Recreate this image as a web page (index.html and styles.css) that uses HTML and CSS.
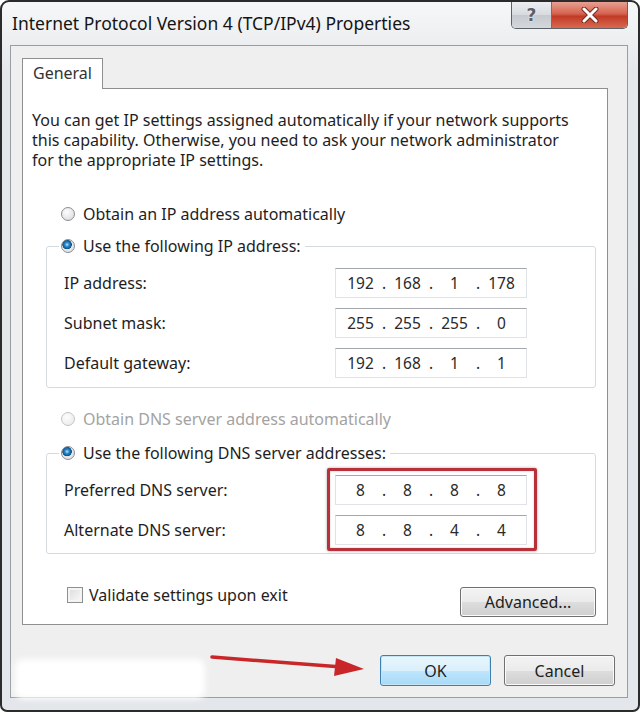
FILE: index.html
```html
<!DOCTYPE html>
<html>
<head>
  <meta charset="utf-8">
  <title>Internet Protocol Version 4 (TCP/IPv4) Properties</title>
  <link rel="stylesheet" href="styles.css">
</head>
<body>
<div class="Window">

  <div class="TitleBar">
    <span class="Title">Internet Protocol Version 4 (TCP/IPv4) Properties</span>
    <div class="Caption">
      <span class="HelpBtn">?</span>
      <span class="CloseBtn">
        <svg width="20" height="16" viewBox="0 0 20 16">
          <path d="M4 2 L16 14 M16 2 L4 14" stroke="#7a2a20" stroke-width="5" stroke-linecap="round"/>
          <path d="M4 2 L16 14 M16 2 L4 14" stroke="#fff" stroke-width="3" stroke-linecap="round"/>
        </svg>
      </span>
    </div>
  </div>

  <div class="Client">
    <div class="Tab">General</div>

    <div class="Panel">
      <p class="Intro">You can get IP settings assigned automatically if your network supports this capability. Otherwise, you need to ask your network administrator for the appropriate IP settings.</p>

      <div class="Option"><span class="Radio"></span>Obtain an IP address automatically</div>

      <fieldset class="Group">
        <legend class="Option"><span class="Radio is-checked"></span>Use the following IP address:</legend>
        <div class="Fields">
          <span>IP address:</span>
          <div class="IpBox"><span>192</span><i>.</i><span>168</span><i>.</i><span>1</span><i>.</i><span>178</span></div>
          <span>Subnet mask:</span>
          <div class="IpBox"><span>255</span><i>.</i><span>255</span><i>.</i><span>255</span><i>.</i><span>0</span></div>
          <span>Default gateway:</span>
          <div class="IpBox"><span>192</span><i>.</i><span>168</span><i>.</i><span>1</span><i>.</i><span>1</span></div>
        </div>
      </fieldset>

      <div class="Option Option--dns is-disabled"><span class="Radio"></span>Obtain DNS server address automatically</div>

      <fieldset class="Group Group--dns">
        <legend class="Option"><span class="Radio is-checked"></span>Use the following DNS server addresses:</legend>
        <div class="Fields Fields--dns">
          <span>Preferred DNS server:</span>
          <div class="IpBox"><span>8</span><i>.</i><span>8</span><i>.</i><span>8</span><i>.</i><span>8</span></div>
          <span>Alternate DNS server:</span>
          <div class="IpBox"><span>8</span><i>.</i><span>8</span><i>.</i><span>4</span><i>.</i><span>4</span></div>
          <div class="Highlight"></div>
        </div>
      </fieldset>

      <div class="Footer">
        <div class="Check"><span class="CheckBox"></span>Validate settings upon exit</div>
        <span class="Btn Btn--advanced">Advanced...</span>
      </div>
    </div>

    <div class="ButtonBar">
      <span class="Smudge"></span>
      <svg class="Arrow" width="160" height="32" viewBox="0 0 160 32">
        <path d="M2 8 L132 18" stroke="#c9262a" stroke-width="3.5" stroke-linecap="round"/>
        <polygon points="126,9 154,20 124,27" fill="#c9262a"/>
      </svg>
      <span class="Btn Btn--default">OK</span>
      <span class="Btn">Cancel</span>
    </div>
  </div>

</div>
</body>
</html>
```
FILE: styles.css
```css
* {
  box-sizing: border-box;
}
body {
  margin: 0;
  font-family: "Noto Sans", "Open Sans", sans-serif;
  font-size: 16px;
  color: #1e1e1e;
}
.Window {
  display: flex;
  flex-direction: column;
  width: 640px;
  height: 712px;
  padding: 0 10px 12px 8px;
  border: 2px solid #2b2b2b;
  border-radius: 9px 9px 7px 7px;
  background: linear-gradient(#f6f7f8, #e5e8eb 70px, #e3e6ea);
  overflow: hidden;
}
.TitleBar {
  display: flex;
  height: 43px;
}
.Title {
  margin: 10px 0 0 2px;
  font-size: 17.5px;
  line-height: 22px;
  color: #141414;
}
.Caption {
  display: flex;
  height: 27px;
  margin-left: auto;
  border: 1px solid #5d6168;
  border-top: 0;
  border-radius: 0 0 5px 5px;
  overflow: hidden;
}
.HelpBtn {
  width: 40px;
  border-right: 1px solid #6d7178;
  background: linear-gradient(#eceef1, #d7dade 50%, #c6cacf 51%, #d4d8dc);
  text-align: center;
  font-family: "DejaVu Sans", sans-serif;
  font-weight: bold;
  font-size: 17px;
  line-height: 26px;
  color: #5a5e64;
  text-shadow: 0 0 2px #fff;
}
.CloseBtn {
  display: flex;
  align-items: center;
  justify-content: center;
  width: 75px;
  background: linear-gradient(#e7a092, #d5634f 45%, #c23a27 55%, #d86a4e);
}
.Client {
  flex: 1;
  padding: 12px 19px 0 11px;
  border: 1px solid #9a9ea4;
  background: #efefef;
}
.Tab {
  position: relative;
  width: 81px;
  height: 31px;
  margin-bottom: -1px;
  padding-left: 10px;
  border: 1px solid #8e8f8f;
  border-bottom: 0;
  background: #fff;
  line-height: 29px;
  color: #333;
}
.Panel {
  padding: 21px 11px 7px 9px;
  border: 1px solid #8e8f8f;
  background: #fff;
}
.Intro {
  width: 548px;
  margin: 0;
  line-height: 20px;
}
.Option {
  display: flex;
  align-items: center;
  gap: 8px;
  height: 20px;
  margin-top: 34px;
  padding-left: 29px;
}
.Option--dns {
  margin-top: 21px;
}
.Option.is-disabled {
  color: #a3a3a3;
}
legend.Option {
  margin: 0 0 0 -5px;
  padding: 0 4px 0 2px;
}
.Radio {
  width: 14px;
  height: 14px;
  border: 1px solid #8a8d92;
  border-radius: 50%;
  background: radial-gradient(circle at 40% 35%, #fdfdfd, #d4d6d9);
}
.is-disabled .Radio {
  border-color: #c3c5c8;
  background: radial-gradient(circle at 40% 35%, #fdfdfd, #e6e7e8);
}
.Radio.is-checked {
  background:
    radial-gradient(circle at 42% 38%, #bfe6fb 0, #2b8ed0 2px, #0d4f86 4.5px, transparent 5px),
    radial-gradient(circle at 40% 35%, #fdfdfd, #d4d6d9);
}
.Group {
  margin: 12px 0 0 14px;
  padding: 12px 0 9px 17px;
  border: 1px solid #d5dadf;
  border-radius: 3px;
}
.Group--dns {
  margin-top: 14px;
  padding-bottom: 8px;
}
.Fields {
  display: grid;
  grid-template-columns: 271px 192px;
  grid-auto-rows: 30px;
  row-gap: 10px;
  align-items: center;
}
.Fields--dns {
  position: relative;
}
.IpBox {
  display: grid;
  grid-template-columns: 37px 10px 37px 10px 37px 10px 37px;
  align-items: center;
  height: 30px;
  padding-left: 6px;
  border: 1px solid #dfe3e8;
  border-top-color: #a3a7ad;
  background: #fff;
  font-size: 15.5px;
  color: #2a2a2a;
}
.IpBox span,
.IpBox i {
  font-style: normal;
  text-align: center;
}
.Highlight {
  position: absolute;
  grid-column: 2 / 3;
  grid-row: 1 / 3;
  inset: -7px -10px -6px -8px;
  border: 3px solid #b8303a;
  border-radius: 2px;
  box-shadow: 0 0 3px rgba(0, 0, 0, 0.35), inset 0 0 2px rgba(0, 0, 0, 0.25);
}
.Footer {
  display: flex;
  align-items: center;
  justify-content: space-between;
  margin-top: 33px;
}
.Check {
  display: flex;
  align-items: center;
  align-self: flex-start;
  gap: 6px;
  height: 20px;
  margin: -2px 0 0 35px;
}
.CheckBox {
  width: 16px;
  height: 16px;
  border: 1px solid #8e8f8f;
  background: linear-gradient(135deg, #d9dadc, #fbfbfb);
  box-shadow: inset 0 0 0 2px #f4f4f4;
}
.Btn {
  display: flex;
  align-items: center;
  justify-content: center;
  width: 111px;
  height: 31px;
  border: 1px solid #707070;
  border-radius: 3px;
  background: linear-gradient(#f3f3f3, #ebebeb 50%, #dddddd 51%, #cfcfcf);
  box-shadow: inset 0 0 0 1px #fbfbfb;
  font-size: 16px;
  color: #1e1e1e;
}
.Btn--advanced {
  width: 136px;
  height: 30px;
}
.Btn--default {
  border-color: #3c7fb1;
  background: linear-gradient(#eaf6fd, #d9f0fc 50%, #bee6fd 51%, #a7d9f5);
  box-shadow: inset 0 0 0 1px #c4e5f6;
}
.ButtonBar {
  position: relative;
  display: flex;
  align-items: flex-start;
  gap: 13px;
  margin-right: -7px;
  padding-top: 30px;
  height: 71px;
}
.Smudge {
  width: 190px;
  height: 40px;
  margin: 4px auto 0 -7px;
  border-radius: 8px;
  background: #fff;
  filter: blur(3px);
}
.Arrow {
  position: absolute;
  left: 188px;
  top: 24px;
}
```
